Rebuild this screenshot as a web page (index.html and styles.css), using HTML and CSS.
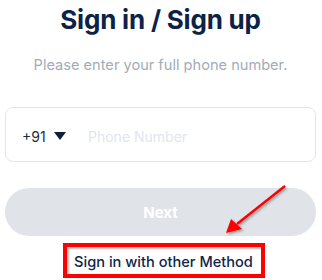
FILE: index.html
```html
<!DOCTYPE html>
<html>
<head>
<meta charset="utf-8">
<link rel="stylesheet" href="styles.css">
</head>
<body>
<div class="page">
  <h1 class="title">Sign in / Sign up</h1>
  <p class="subtitle">Please enter your full phone number.</p>
  <div class="phone-field">
    <div class="country">
      <span class="code">+91</span>
      <svg class="caret" width="12" height="8" viewBox="0 0 12 8"><path d="M0 0 L12 0 L6 8 Z" fill="#0c2040"/></svg>
    </div>
    <span class="placeholder">Phone Number</span>
  </div>
  <button class="next">Next</button>
  <div class="other">
    <span class="other-box">Sign in with other Method</span>
  </div>
  <svg class="arrow" width="322" height="280" viewBox="0 0 322 280">
    <defs>
      <filter id="sh" x="-20%" y="-20%" width="140%" height="140%">
        <feDropShadow dx="1.5" dy="1.5" stdDeviation="1" flood-color="#000" flood-opacity="0.35"/>
      </filter>
    </defs>
    <g filter="url(#sh)">
      <line x1="285" y1="186" x2="237" y2="224" stroke="#ff0000" stroke-width="2.5"/>
      <path d="M226 233 L231 219 L242 229 Z" fill="#ff0000"/>
    </g>
  </svg>
</div>
</body>
</html>
```
FILE: styles.css
```css
html, body {
  margin: 0;
  padding: 0;
  background: #ffffff;
}
.page {
  position: relative;
  width: 322px;
  height: 280px;
  box-sizing: border-box;
  padding: 0 6px 0 5px;
  font-family: Inter, "Liberation Sans", sans-serif;
  display: flex;
  flex-direction: column;
  align-items: stretch;
  overflow: hidden;
}
.title {
  margin: 4px 0 0;
  text-align: center;
  font-size: 26px;
  line-height: 32px;
  font-weight: 700;
  color: #0b2346;
  letter-spacing: -0.2px;
}
.subtitle {
  margin: 20px 0 0;
  text-align: center;
  font-size: 14.6px;
  line-height: 18px;
  color: #a4abb8;
}
.phone-field {
  margin-top: 33px;
  height: 55px;
  box-sizing: border-box;
  border: 1px solid #e2e6ec;
  border-radius: 8px;
  display: flex;
  align-items: center;
  padding-left: 16px;
  padding-top: 3px;
}
.country {
  display: flex;
  align-items: center;
  gap: 8px;
  width: 66px;
}
.code {
  font-size: 14px;
  color: #1b2b45;
}
.caret {
  display: block;
}
.placeholder {
  font-size: 14px;
  color: #e1e6ee;
}
.next {
  margin-top: 26px;
  height: 48px;
  border: none;
  border-radius: 24px;
  background: #e0e4e9;
  color: #ffffff;
  font-family: Inter, "Liberation Sans", sans-serif;
  font-size: 15px;
  font-weight: 700;
}
.other {
  margin-top: 7px;
  display: flex;
  justify-content: center;
}
.other-box {
  margin-left: 6px;
  width: 202px;
  height: 35px;
  box-sizing: border-box;
  border: 4px solid #ff0000;
  box-shadow: inset 2px 2px 2px rgba(0,0,0,0.25);
  display: flex;
  align-items: center;
  justify-content: center;
  padding-top: 2px;
  font-size: 14.6px;
  font-weight: 500;
  color: #0f2548;
}
.arrow {
  position: absolute;
  left: 0;
  top: 0;
  pointer-events: none;
}
```
